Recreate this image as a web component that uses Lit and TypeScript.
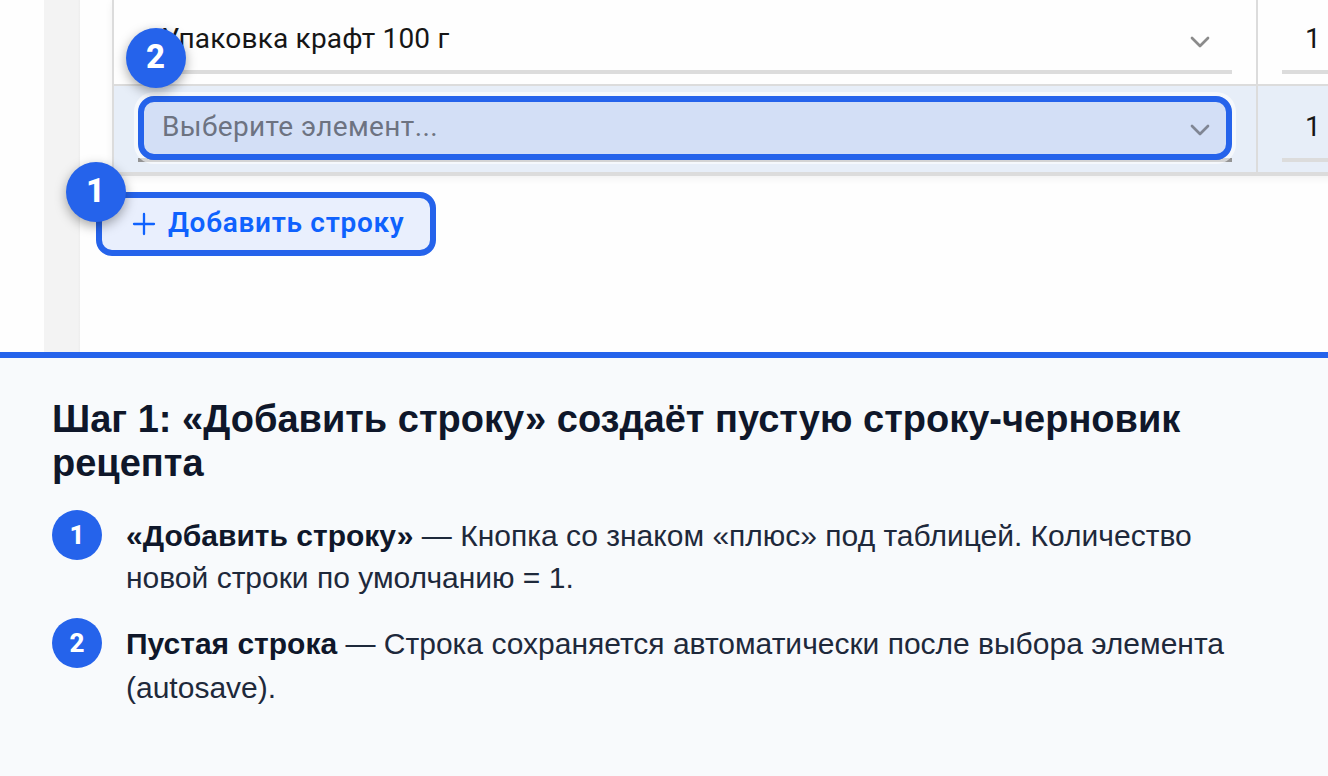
import { LitElement, html, css } from "lit";
import { customElement, property } from "lit/decorators.js";

@customElement("select-field")
class SelectField extends LitElement {
  @property() value = "";
  @property({ type: Boolean, reflect: true }) active = false;

  static styles = css`
    :host { display: block; position: relative; height: 74px; color: #161616; }
    .field { box-sizing: border-box; height: 100%; display: flex; align-items: center; justify-content: space-between; padding: 0 20px 0 24px; border-bottom: 4px solid #dcdcdc; }
    .text { white-space: nowrap; font-size: 28px; line-height: 40px; letter-spacing: 0.2px; padding-top: 8px; }
    .arrow { width: 24px; height: 24px; fill: none; stroke: #8b8b8b; stroke-width: 2.7; stroke-linecap: round; stroke-linejoin: round; margin-top: 14px; }
    :host([active]) .field { border-bottom-color: #949494; }
    :host([active]) .text { color: #757575; letter-spacing: 0.37px; }
    .mark { position: absolute; box-sizing: border-box; left: 0; right: 0; bottom: 2px; height: 64px; border: 6px solid #2563eb; border-radius: 16px; background: rgba(37, 99, 235, 0.1); box-shadow: 0 0 0 4px rgba(255, 255, 255, 0.6); }
  `;

  render() {
    return html`
      <div class="field">
        <span class="text">${this.value}</span>
        <svg class="arrow" viewBox="0 0 24 24"><path d="M4 8l8 8 8-8" /></svg>
      </div>
      ${this.active ? html`<div class="mark"></div>` : ""}
    `;
  }
}

@customElement("app-root")
class AppRoot extends LitElement {
  private notes = [
    { title: "«Добавить строку»", text: "Кнопка со знаком «плюс» под таблицей. Количество новой строки по умолчанию = 1." },
    { title: "Пустая строка", text: "Строка сохраняется автоматически после выбора элемента (autosave)." },
  ];

  static styles = css`
    :host { display: flex; flex-direction: column; width: 1328px; height: 776px; overflow: hidden; background: #fff; font-family: Roboto, "Noto Sans", sans-serif; }
    .shot { height: 352px; display: flex; overflow: hidden; background: #fefefe; }
    .gutter { box-sizing: border-box; width: 36px; margin-left: 44px; background: linear-gradient(90deg, #f3f3f3 94%, #ededed); flex: none; }
    .page { flex: 1; min-width: 0; padding-left: 16px; background: #fefefe; }
    .table { margin-left: 16px; width: 1300px; border-left: 2px solid #dcdcdc; border-bottom: 4px solid #dcdcdc; box-shadow: 0 2px 8px rgba(0, 0, 0, 0.06); }
    .row { display: grid; grid-template-columns: 1144px 1fr; height: 84px; }
    .row.draft { height: 86px; border-top: 2px solid #dcdcdc; background: #e7eef8; }
    .cell { box-sizing: border-box; position: relative; padding: 0 24px; border-right: 2px solid #dcdcdc; }
    .draft .cell { padding-top: 2px; }
    .num { box-sizing: border-box; height: 74px; padding: 19px 24px 0 23px; border-bottom: 4px solid #dcdcdc; font-size: 28px; line-height: 40px; color: #161616; }
    .badge { position: absolute; width: 60px; height: 60px; border-radius: 50%; display: flex; align-items: center; justify-content: center; box-sizing: border-box; padding: 0 1px 4px 0; background: #2563eb; color: #fff; font: 800 33px Roboto, sans-serif; letter-spacing: 0; box-shadow: 0 4px 12px rgba(0, 0, 0, 0.35); z-index: 2; }
    .badge.two { left: 12px; top: 28px; }
    .badge.one { left: -36px; top: -36px; }
    .add { position: relative; box-sizing: border-box; width: 340px; height: 64px; margin-top: 16px; padding: 0 0 4px 30px; display: flex; align-items: center; gap: 12px; border: 6px solid #2563eb; border-radius: 16px; background: #e9effd; color: #0f62fe; font-size: 28px; font-weight: 600; letter-spacing: 0.7px; white-space: nowrap; }
    .plus { width: 24px; height: 24px; fill: none; stroke: currentColor; stroke-width: 2.3; stroke-linecap: round; margin-top: 4px; }
    .panel { flex: 1; box-sizing: border-box; border-top: 6px solid #2563eb; background: #f8fafc; padding: 38px 52px 0; font-family: "Liberation Sans", Arial, sans-serif; color: #1e293b; }
    .title { margin: 0 0 21px; padding-top: 1px; font-size: 38px; line-height: 44px; font-weight: 700; color: #0f172a; }
    .notes { display: flex; flex-direction: column; gap: 22px; }
    .note { display: flex; gap: 24px; height: 86px; }
    .dot { flex: none; box-sizing: border-box; width: 50px; height: 50px; margin-top: 4px; border-radius: 50%; display: flex; align-items: center; justify-content: center; background: #2563eb; color: #fff; font: 800 26px Roboto, sans-serif; }
    .body { margin: 8px 0 0; font-size: 30px; line-height: 43.5px; }
    .note:first-child .body { margin-top: 9px; line-height: 42px; }
    .body b { color: #0f172a; }
  `;

  render() {
    return html`
      <div class="shot">
        <div class="gutter"></div>
        <div class="page">
          <div class="table">
            <div class="row">
              <div class="cell">
                <select-field value="Упаковка крафт 100 г"></select-field>
                <div class="badge two">2</div>
              </div>
              <div class="cell"><div class="num">1</div></div>
            </div>
            <div class="row draft">
              <div class="cell"><select-field active value="Выберите элемент..."></select-field></div>
              <div class="cell"><div class="num">1</div></div>
            </div>
          </div>
          <div class="add">
            <svg class="plus" viewBox="0 0 24 24"><path d="M12 2v20M2 12h20" /></svg>
            <span>Добавить строку</span>
            <div class="badge one">1</div>
          </div>
        </div>
      </div>
      <div class="panel">
        <h1 class="title">Шаг 1: «Добавить строку» создаёт пустую строку-черновик рецепта</h1>
        <div class="notes">
          ${this.notes.map((n, i) => html`
            <div class="note">
              <span class="dot">${i + 1}</span>
              <p class="body"><b>${n.title}</b> — ${n.text}</p>
            </div>`)}
        </div>
      </div>
    `;
  }
}
